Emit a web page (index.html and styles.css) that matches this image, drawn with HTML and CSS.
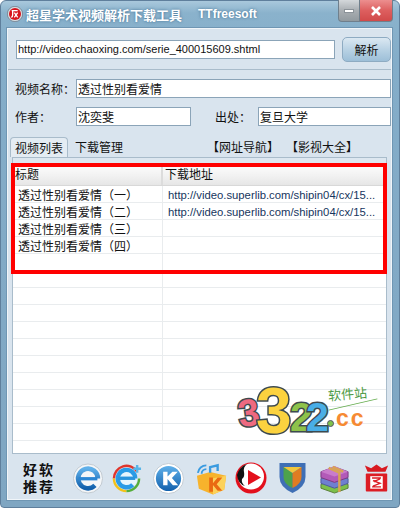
FILE: index.html
```html
<!DOCTYPE html>
<html lang="en">

<head>
    <meta charset="UTF-8">
    <meta name="viewport" content="width=device-width, initial-scale=1.0">
    <title>超星学术视频解析下载工具</title>

    <link rel="stylesheet" href="styles.css">
</head>

<body>
    <main class="window">
        <header class="titlebar">
            <svg class="app-icon" width="16" height="16" viewBox="0 0 24 24">
                <circle cx="12" cy="12" r="11.500" fill="#d5dbe0" stroke="#5d6d7c" />
                <circle cx="12" cy="12" r="9" fill="#d8141c" />
                <path d="M7 7h9M8.500 7v6q0 3-2 4M11 10l5 7M16 10l-5 7" stroke="#fff" stroke-width="2" fill="none" />
            </svg>
            <span class="app-name">超星学术视频解析下载工具</span>
            <span class="app-brand">TTfreesoft</span>
            <div class="win-buttons">
                <div class="win-min"><span></span></div>
                <div class="win-close">
                    <svg width="12" height="10" viewBox="0 0 12 10">
                        <path d="M2 1l8 8M10 1l-8 8" stroke="#fff" stroke-width="2.600" />
                    </svg>
                </div>
            </div>
        </header>

        <div class="client">
            <section class="url-bar">
                <div class="field url-field">http://video.chaoxing.com/serie_400015609.shtml</div>
                <button class="parse-btn">解析</button>
            </section>

            <section class="info">
                <div class="info-row">
                    <label class="info-label">视频名称：</label>
                    <div class="field grow">透过性别看爱情</div>
                </div>
                <div class="info-row">
                    <label class="info-label">作者：</label>
                    <div class="field author">沈奕斐</div>
                    <label class="info-label source">出处：</label>
                    <div class="field grow">复旦大学</div>
                </div>
            </section>

            <nav class="tabs">
                <div class="tab active">视频列表</div>
                <div class="tab">下载管理</div>
                <div class="tab-links">
                    <span>【网址导航】</span>
                    <span>【影视大全】</span>
                </div>
            </nav>

            <section class="panel">
                <div class="list">
                    <div class="row head">
                        <div class="col-title">标题</div>
                        <div class="col-url">下载地址</div>
                    </div>
                    <div class="row">
                        <div class="col-title">透过性别看爱情（一）</div>
                        <div class="col-url link">http://video.superlib.com/shipin04/cx/15...</div>
                    </div>
                    <div class="row">
                        <div class="col-title">透过性别看爱情（二）</div>
                        <div class="col-url link">http://video.superlib.com/shipin04/cx/15...</div>
                    </div>
                    <div class="row">
                        <div class="col-title">透过性别看爱情（三）</div>
                        <div class="col-url"></div>
                    </div>
                    <div class="row">
                        <div class="col-title">透过性别看爱情（四）</div>
                        <div class="col-url"></div>
                    </div>
                    <div class="row"><div class="col-title"></div><div class="col-url"></div></div>
                    <div class="row"><div class="col-title"></div><div class="col-url"></div></div>
                    <div class="row"><div class="col-title"></div><div class="col-url"></div></div>
                    <div class="row"><div class="col-title"></div><div class="col-url"></div></div>
                    <div class="row"><div class="col-title"></div><div class="col-url"></div></div>
                    <div class="row"><div class="col-title"></div><div class="col-url"></div></div>
                    <div class="row"><div class="col-title"></div><div class="col-url"></div></div>
                    <div class="row"><div class="col-title"></div><div class="col-url"></div></div>
                    <div class="row"><div class="col-title"></div><div class="col-url"></div></div>
                    <div class="row"><div class="col-title"></div><div class="col-url"></div></div>
                    <div class="row"><div class="col-title"></div><div class="col-url"></div></div>
                </div>
                <div class="highlight"></div>
                <div class="watermark">
                    <span class="digit d1">3</span>
                    <span class="digit d2">3</span>
                    <span class="digit d3">2</span>
                    <span class="digit d4">2</span>
                    <span class="wm-dot"></span>
                    <span class="wm-cc">cc</span>
                    <span class="wm-site">软件站</span>
                    <span class="wm-line"></span>
                </div>
            </section>

            <footer class="recommend">
                <div class="rec-title">好软<br>推荐</div>
                <div class="rec-icons">
                    <svg class="ico-ie" width="30" height="31" viewBox="0 0 32 32">
                        <defs>
                            <linearGradient id="blue" x1="0" y1="0" x2="0" y2="1">
                                <stop offset="0" stop-color="#5fb0ea" />
                                <stop offset="1" stop-color="#1260ac" />
                            </linearGradient>
                        </defs>
                        <circle cx="16" cy="16" r="15.500" fill="#f4f6f8" stroke="#bfc7cf" />
                        <path d="M26.500 16A10.500 10.500 0 1 0 23.400 23.400" stroke="url(#blue)" stroke-width="5" fill="none" />
                        <rect x="6" y="14.500" width="20" height="3.500" fill="#2b86d4" />
                    </svg>
                    <svg class="ico-ie2" width="31" height="31" viewBox="0 0 32 32">
                        <path d="M3 16a13 13 0 0 1 24-7" stroke="#e0352b" stroke-width="2.500" fill="none" />
                        <path d="M3 16a13 13 0 0 0 13 13" stroke="#f2c21a" stroke-width="2.500" fill="none" />
                        <path d="M16 29a13 13 0 0 0 13-13" stroke="#54ae3a" stroke-width="2.500" fill="none" />
                        <circle cx="16" cy="16" r="11" fill="#e6f5fd" />
                        <path d="M25 16A9 9 0 1 0 22.400 22.400" stroke="#2a9be6" stroke-width="4.500" fill="none" />
                        <rect x="7" y="14" width="18" height="3.500" fill="#2a94dc" />
                        <path d="M27 2v8M23 6h8" stroke="#57b5e8" stroke-width="2.500" />
                    </svg>
                    <svg class="ico-k" width="31" height="31" viewBox="0 0 32 32">
                        <circle cx="16" cy="16" r="15.500" fill="#fff" stroke="#c3cbd3" />
                        <circle cx="16" cy="16" r="13" fill="url(#blue)" />
                        <path d="M10.500 9h4.500v5l5-5h5.500l-6 6.500 6.500 7.500h-5.500l-5.500-6.500v6.500h-4.500z" fill="#fff" />
                    </svg>
                    <svg class="ico-gift" width="32" height="33" viewBox="0 0 34 34">
                        <path d="M1 14l14-4 17 4-2 15-12 5-15-6z" fill="#f7b32c" />
                        <path d="M17 17l15-3-2 15-12 5z" fill="#fcd25b" />
                        <path d="M14 16h4v6l5-6h5l-6 7 6 7h-5l-5-6v7h-4z" fill="#ea6a12" />
                        <path d="M2 11a9 9 0 0 1 9-8M6 12a5 5 0 0 1 5-5" stroke="#3a9be0" stroke-width="2" fill="none" />
                        <path d="M15 11V5l8-2v6" stroke="#3a9be0" stroke-width="2.500" fill="none" />
                    </svg>
                    <svg class="ico-play" width="32" height="32" viewBox="0 0 32 32">
                        <circle cx="16" cy="16" r="15.500" fill="#e3101c" />
                        <circle cx="16" cy="14.500" r="13" fill="#fff" />
                        <path d="M2 13Q4 5 12 2q-4 3-3 8t-2 7q-1 4 3 7-7-2-8-11z" fill="#111" />
                        <path d="M13 8l13 7.500L13 23z" fill="#e3101c" />
                    </svg>
                    <svg class="ico-shield" width="29" height="32" viewBox="0 0 28 32">
                        <path d="M1 1h26v14q0 10-13 16Q1 25 1 15z" fill="#3f6fb5" />
                        <path d="M5 5l9 6v15q-9-4-9-11z" fill="#4da24a" />
                        <path d="M23 5l-9 6v15q9-4 9-11z" fill="#e07c22" />
                        <path d="M5 5h18l-9 6z" fill="#f1c63c" />
                    </svg>
                    <svg class="ico-rar" width="33" height="31" viewBox="0 0 32 32">
                        <path d="M2 22l14-5 14 5v4l-14 5-14-5z" fill="#7cc04a" stroke="#5b7d3a" />
                        <path d="M2 16l14-5 14 5v5l-14 5-14-5z" fill="#6f7fd0" stroke="#4d5a99" />
                        <path d="M2 9l14-5 14 5v6l-14 5-14-5z" fill="#b35ab8" stroke="#7c3a80" />
                        <path d="M2 9l14-6 14 6-14 5z" fill="#c97ccc" />
                        <path d="M10 5l11 5v20M14 4l11 5" stroke="#d8a455" stroke-width="2.500" fill="none" />
                    </svg>
                    <svg class="ico-red" width="25" height="32" viewBox="0 0 28 32">
                        <path d="M4 9L1 2l7 3 6-4 6 4 7-3-3 7z" fill="#d81920" />
                        <rect x="2" y="11" width="24" height="20" rx="1" fill="#dc1c24" />
                        <rect x="7" y="14" width="14" height="14" fill="#fff" />
                        <path d="M9 16h10M10 19l8 3-8 3M9 26h10M18 17l-7 3" stroke="#dc1c24" stroke-width="1.500" fill="none" />
                    </svg>
                </div>
            </footer>
        </div>
    </main>
</body>

</html>
```

FILE: styles.css
```css
* {
    box-sizing: border-box;
}

body {
    margin: 0;
    background: #fff;
    font-family: "Noto Sans CJK SC", sans-serif;
    font-size: 12px;
    color: #111;
    overflow: hidden;
}

.window {
    width: 400px;
    height: 508px;
    display: flex;
    flex-direction: column;
    padding: 0 7px 7px 6px;
    border-radius: 6px 6px 4px 4px;
    border: 1px solid #5f7f9c;
    background: linear-gradient(#a9c8dc 0, #8ab2cc 12px, #84adc9 60px, #7fa6c2 100%);
}

.titlebar {
    height: 27px;
    flex: none;
    display: flex;
    align-items: center;
    position: relative;
    padding-bottom: 1px;
}

.app-icon {
    flex: none;
}

.app-name {
    margin-left: 3px;
    font-size: 13px;
    font-weight: 700;
    color: #fff;
    text-shadow: 0 0 3px #3e6d90;
}

.app-brand {
    margin-left: 16px;
    font-family: "Liberation Sans", sans-serif;
    font-size: 12px;
    font-weight: 700;
    color: #fff;
    text-shadow: 0 0 3px #3e6d90;
}

.win-buttons {
    position: absolute;
    top: -1px;
    right: -1px;
    display: flex;
    height: 22px;
}

.win-min,
.win-close {
    display: flex;
    align-items: center;
    justify-content: center;
    border: 1px solid #6f7f8c;
    border-top: 0;
}

.win-min {
    width: 22px;
    background: linear-gradient(#d4d8db, #a9aeb2 50%, #929a9f);
    border-radius: 0 0 0 4px;
}

.win-min span {
    width: 10px;
    height: 4px;
    background: #fff;
    border: 1px solid #8b9298;
}

.win-close {
    width: 33px;
    background: linear-gradient(#ec8f8f, #dd5f5f 50%, #d14a4a);
    border-left: 0;
    border-radius: 0 0 4px 0;
}

.client {
    flex: 1;
    min-height: 0;
    display: flex;
    flex-direction: column;
    background: #d9e4ee;
    border: 1px solid #f0f5f9;
    outline: 1px solid #6f96b3;
}

.url-bar {
    height: 41px;
    flex: none;
    display: flex;
    align-items: center;
    gap: 7px;
    padding-left: 8px;
    border-bottom: 1px solid #a9bccb;
}

.field {
    height: 19px;
    background: #fff;
    border: 1px solid #8ba4b8;
    padding-left: 1px;
    font-size: 12px;
    line-height: 17px;
    white-space: nowrap;
    overflow: hidden;
}

.url-field {
    width: 319px;
    font-family: "Liberation Sans", sans-serif;
    font-size: 11px;
}

.parse-btn {
    width: 49px;
    height: 25px;
    padding: 0;
    font: 12px "Noto Sans CJK SC", sans-serif;
    color: #111;
    background: linear-gradient(#dbe8f2, #b9d2e4 50%, #9dbfd8);
    border: 1px solid #8eabc2;
    border-radius: 5px;
}

.info {
    display: flex;
    flex-direction: column;
    gap: 9px;
    padding: 9px 0 0 7px;
}

.info-row {
    display: flex;
    align-items: center;
}

.info-label {
    width: 61px;
    font-size: 12px;
}

.source {
    width: 43px;
    margin-left: 24px;
}

.grow {
    flex: 1;
}

.author {
    width: 115px;
}

.tabs {
    height: 31px;
    flex: none;
    display: flex;
    align-items: flex-end;
    padding-left: 2px;
    position: relative;
}

.tab {
    height: 20px;
    padding: 0 7px;
    font-size: 12px;
    line-height: 20px;
    white-space: nowrap;
}

.tab.active {
    width: 58px;
    padding: 0 4px;
    background: #e4ecf3;
    border: 1px solid #a9bccb;
    border-bottom: 0;
    border-radius: 4px 4px 0 0;
}

.tab-links {
    display: flex;
    gap: 7px;
    position: absolute;
    left: 199px;
    bottom: 1px;
    font-size: 12px;
    line-height: 18px;
}

.panel {
    flex: 1;
    min-height: 0;
    position: relative;
    margin: 0 4px;
    padding-top: 5px;
    background: #dde7f0;
    border: 1px solid #a9bccb;
}

.list {
    height: 100%;
    background: #fff;
    overflow: hidden;
}

.row {
    display: flex;
    height: 17px;
    font-size: 12px;
    line-height: 18px;
    border-bottom: 1px solid #e9ecee;
}

.row.head {
    height: 23px;
    line-height: 22px;
    background: linear-gradient(#fff, #f1f1f1 60%, #e6e6e6);
    border-bottom: 1px solid #d8d8d8;
}

.col-title {
    width: 150px;
    flex: none;
    padding-left: 5px;
    border-right: 1px solid #e9ecee;
}

.head .col-title {
    padding-left: 2px;
    border-right: 2px solid #dcdcdc;
}

.col-url {
    flex: 1;
    padding-left: 5px;
    white-space: nowrap;
}

.head .col-url {
    padding-left: 2px;
}

.link {
    font-family: "Liberation Sans", sans-serif;
    font-size: 11.300px;
    color: #16365e;
}

.highlight {
    position: absolute;
    left: -2px;
    top: 5px;
    width: 376px;
    height: 111px;
    border: 4px solid #f00;
}

.watermark {
    position: absolute;
    left: 223px;
    top: 227px;
    width: 145px;
    height: 52px;
}

.digit {
    position: absolute;
    font-family: "Liberation Sans", sans-serif;
    font-weight: 700;
    line-height: 1;
    -webkit-text-stroke: 3px #3d4a4f;
    paint-order: stroke fill;
}

.d1 {
    left: 2px;
    top: 9px;
    font-size: 38px;
    color: #ee6a80;
    transform: rotate(-8deg);
}

.d2 {
    left: 20px;
    top: -6px;
    font-size: 64px;
    color: #fbd23f;
}

.d3 {
    left: 54px;
    top: 12px;
    font-size: 41px;
    color: #8ec24a;
}

.d4 {
    left: 70px;
    top: 12px;
    font-size: 41px;
    color: #49aee6;
}

.wm-dot {
    position: absolute;
    left: 91px;
    top: 35px;
    width: 7px;
    height: 7px;
    border-radius: 50%;
    background: #7fc24a;
    border: 1px solid #556;
}

.wm-cc {
    position: absolute;
    left: 100px;
    top: 22px;
    font-family: "Liberation Sans", sans-serif;
    font-size: 23px;
    font-weight: 700;
    line-height: 1;
    letter-spacing: 2px;
    color: #f68a33;
}

.wm-site {
    position: absolute;
    left: 92px;
    top: 0;
    font-size: 13px;
    line-height: 18px;
    color: #4d9a45;
    transform: rotate(-5deg);
}

.wm-line {
    position: absolute;
    left: 92px;
    top: 19px;
    width: 50px;
    height: 1px;
    background: #66ad4f;
    transform: rotate(-13deg);
}

.recommend {
    height: 45px;
    flex: none;
    display: flex;
    align-items: center;
    padding-top: 3px;
    background: #d9e4ee;
}

.rec-title {
    width: 65px;
    padding-left: 15px;
    font-size: 14px;
    font-weight: 700;
    line-height: 17px;
    letter-spacing: 2px;
    white-space: nowrap;
}

.rec-icons {
    display: flex;
    align-items: center;
}

.ico-ie2 {
    margin-left: 8px;
}

.ico-k {
    margin-left: 11px;
}

.ico-gift {
    margin-left: 12px;
}

.ico-play {
    margin-left: 7px;
}

.ico-shield,
.ico-rar {
    margin-left: 11px;
}

.ico-red {
    margin-left: 13px;
}
```
